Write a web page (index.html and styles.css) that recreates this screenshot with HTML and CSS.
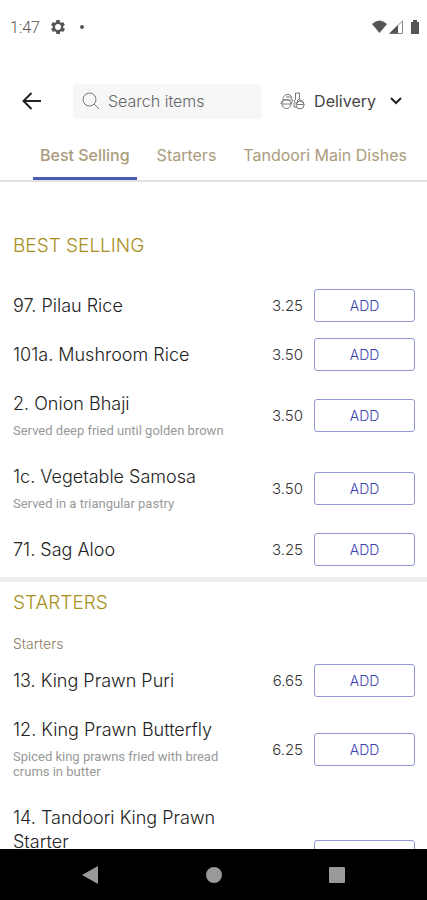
FILE: index.html
```html
<!DOCTYPE html>
<html lang="en">
    <head>
        <meta charset="utf-8">
        <meta name="viewport" content="width=device-width, initial-scale=1">
        <title>Menu</title>
        <link rel="stylesheet" href="styles.css">
    </head>
    <body>
        <div class="statusbar">
            <span class="time">1:47</span>
            <svg class="gear" width="14" height="14" viewBox="2 2 20 20"><path fill-rule="evenodd" d="M19.4 13a7.800 7.800 0 0 0 0-2l2.100-1.600a.5.5 0 0 0 .1-.6l-2-3.500a.5.5 0 0 0-.6-.2l-2.500 1a7.300 7.300 0 0 0-1.700-1l-.4-2.700a.5.5 0 0 0-.5-.4h-4a.5.5 0 0 0-.5.4L9.200 5.100a7.700 7.700 0 0 0-1.700 1L5 5.100a.5.5 0 0 0-.6.2l-2 3.500a.5.5 0 0 0 .1.600L4.600 11a8 8 0 0 0 0 2l-2.100 1.600a.5.5 0 0 0-.1.600l2 3.500c.1.200.4.300.6.200l2.500-1a7.300 7.300 0 0 0 1.700 1l.4 2.700c0 .2.200.4.500.4h4c.200 0 .5-.2.500-.4l.4-2.700a7.700 7.700 0 0 0 1.700-1l2.500 1c.2.100.5 0 .6-.2l2-3.500a.5.5 0 0 0-.1-.6zM12 16.200a4.200 4.200 0 1 1 0-8.400 4.200 4.200 0 0 1 0 8.400z"/></svg>
            <span class="dot"></span>
            <svg class="signals" width="48" height="14" viewBox="0 0 48 14">
                <path d="M0 4Q7.500-3 15 4L7.500 13z"/>
                <path d="M17.500 13.500L30.500 1v12.500z" class="outline"/>
                <path d="M17.500 13.500L26 5v8.500z"/>
                <path d="M39 2h2V0h4v2h2v12h-8z"/>
            </svg>
        </div>

        <header class="topbar">
            <button class="back" aria-label="Back">
                <svg width="20" height="18" viewBox="0 0 20 18"><path d="M19 9H1.500M9.500 1L1.500 9l8 8"/></svg>
            </button>
            <label class="search">
                <svg width="18" height="18" viewBox="0 0 18 18"><circle cx="7.500" cy="7.500" r="6.500"/><path d="M12 12l5 5"/></svg>
                <input type="text" placeholder="Search items" aria-label="Search items">
            </label>
            <button class="delivery">
                <svg class="scooter" width="25" height="18" viewBox="0 0 25 18">
                    <path d="M3 8C3 4 5 2.500 8 2.500S12 5 12 8M1 12c0-3 2-4 5-4h5.500M6 5h5"/>
                    <circle cx="6.500" cy="12" r="4.500"/>
                    <path d="M2 12h9l2-4"/>
                    <path d="M15.500 1h4v6l-2 1v3h-2c-1 0-1-1-1-2l1-2z"/>
                    <path d="M19 8c3 0 5 2 5 5"/>
                    <circle cx="20" cy="13" r="4"/>
                    <path d="M14 11v4h3M17 12.500h6"/>
                </svg>
                <span>Delivery</span>
                <svg class="chevron" width="12" height="8" viewBox="0 0 12 8"><path d="M1 1l5 5 5-5"/></svg>
            </button>
        </header>

        <nav class="tabs">
            <a href="#best" class="active">Best Selling</a>
            <a href="#starters">Starters</a>
            <a href="#tandoori">Tandoori Main Dishes</a>
        </nav>

        <main class="menu">
            <section id="best" class="best">
                <h2>BEST SELLING</h2>
                <div class="item">
                    <div class="info"><h3>97. Pilau Rice</h3></div>
                    <span class="price">3.25</span>
                    <button class="add">ADD</button>
                </div>
                <div class="item">
                    <div class="info"><h3>101a. Mushroom Rice</h3></div>
                    <span class="price">3.50</span>
                    <button class="add">ADD</button>
                </div>
                <div class="item">
                    <div class="info">
                        <h3>2. Onion Bhaji</h3>
                        <p>Served deep fried until golden brown</p>
                    </div>
                    <span class="price">3.50</span>
                    <button class="add">ADD</button>
                </div>
                <div class="item">
                    <div class="info">
                        <h3>1c. Vegetable Samosa</h3>
                        <p>Served in a triangular pastry</p>
                    </div>
                    <span class="price">3.50</span>
                    <button class="add">ADD</button>
                </div>
                <div class="item">
                    <div class="info"><h3>71. Sag Aloo</h3></div>
                    <span class="price">3.25</span>
                    <button class="add">ADD</button>
                </div>
            </section>

            <section id="starters" class="starters">
                <h2>STARTERS</h2>
                <h4>Starters</h4>
                <div class="item">
                    <div class="info"><h3>13. King Prawn Puri</h3></div>
                    <span class="price">6.65</span>
                    <button class="add">ADD</button>
                </div>
                <div class="item">
                    <div class="info">
                        <h3>12. King Prawn Butterfly</h3>
                        <p>Spiced king prawns fried with bread crums in butter</p>
                    </div>
                    <span class="price">6.25</span>
                    <button class="add">ADD</button>
                </div>
                <div class="item tall">
                    <div class="info"><h3>14. Tandoori King Prawn Starter</h3></div>
                    <button class="add" aria-label="Add"></button>
                </div>
            </section>
        </main>

        <div class="navbar">
            <button aria-label="Back"><svg width="18" height="20" viewBox="0 0 18 20"><path d="M17 1v18L1 10z"/></svg></button>
            <button aria-label="Home"><svg width="18" height="18" viewBox="0 0 18 18"><circle cx="9" cy="9" r="8"/></svg></button>
            <button aria-label="Recent apps"><svg width="18" height="18" viewBox="0 0 18 18"><rect x="1" y="1" width="16" height="16" rx="1"/></svg></button>
        </div>
    </body>
</html>
```
FILE: styles.css
```css
* {
    box-sizing: border-box;
}
body {
    margin: 0;
    height: 100vh;
    display: flex;
    flex-direction: column;
    overflow: hidden;
    background-color: #fff;
    font-family: Inter, "Open Sans", sans-serif;
    color: #333;
}
h2, h3, h4, p {
    margin: 0;
    font-weight: 300;
}
button {
    padding: 0;
    border: none;
    background: none;
    font-family: inherit;
    cursor: pointer;
}
svg {
    display: block;
    flex: none;
}

/* android status bar */
.statusbar {
    flex: none;
    display: flex;
    align-items: center;
    height: 54px;
    padding: 0 7px 0 10px;
    fill: #555;
}
.time {
    font-family: Roboto, sans-serif;
    font-size: 16px;
    font-weight: 300;
    color: #555;
}
.gear {
    margin-left: 11px;
}
.dot {
    width: 4px;
    height: 4px;
    margin-left: 15px;
    border-radius: 50%;
    background-color: #555;
}
.signals {
    margin-left: auto;
}
.signals .outline {
    fill: none;
    stroke: #888;
}

.topbar {
    flex: none;
    display: flex;
    align-items: center;
    height: 78px;
    padding: 16px 25px 0 22px;
}
.back, .search svg, .delivery svg {
    fill: none;
    stroke: #222;
    stroke-width: 2;
}
.search {
    flex: 1;
    display: flex;
    align-items: center;
    gap: 8px;
    min-width: 0;
    height: 35px;
    margin-left: 31px;
    padding-left: 9px;
    border-radius: 4px;
    background-color: #f7f7f7;
}
.search svg {
    stroke: #777;
    stroke-width: 1;
}
.search input {
    flex: 1;
    min-width: 0;
    padding: 0;
    border: none;
    outline: none;
    background: none;
    font-family: inherit;
    font-size: 16px;
    font-weight: 300;
}
.search input::placeholder {
    color: #666;
}
.delivery {
    display: flex;
    align-items: center;
    margin-left: 18px;
    font-size: 16px;
    color: #444;
}
.delivery span {
    margin: 0 14px 0 9px;
}
.delivery .scooter {
    stroke: #777;
    stroke-width: 1;
}

.tabs {
    flex: none;
    display: flex;
    gap: 13px;
    height: 50px;
    padding-left: 33px;
    border-bottom: 2px solid #e2e2e2;
    white-space: nowrap;
    overflow: hidden;
}
.tabs a {
    height: 48px;
    padding: 0 7px;
    line-height: 46px;
    font-size: 16px;
    color: #ab9b7c;
    text-decoration: none;
}
.tabs .active {
    border-bottom: 3px solid #4c5bb5;
    font-weight: 500;
}

.menu {
    flex: 1;
    min-height: 0;
    overflow: hidden;
}
.best {
    padding: 52px 0 3px;
    border-bottom: 5px solid #eee;
}
.menu h2 {
    padding-left: 13px;
    line-height: 24px;
    font-size: 19px;
    color: #a98f22;
}
.best h2 {
    margin-bottom: 23px;
}
.starters {
    padding-top: 9px;
}
.menu h4 {
    margin: 19px 0 2px;
    padding-left: 13px;
    line-height: 20px;
    font-size: 14px;
    color: #8d7c61;
}

.item {
    display: flex;
    align-items: center;
    padding: 0 12px 0 13px;
}
.info {
    flex: 1;
    align-self: flex-start;
    padding: 13px 10px 12px 0;
}
.info h3 {
    line-height: 24px;
    font-size: 18px;
    color: #222;
}
.info p {
    margin: 7px 0 2px;
    line-height: 15px;
    font-family: Roboto, sans-serif;
    font-size: 13px;
    font-weight: 400;
    color: #999;
}
.price {
    width: 50px;
    text-align: right;
    font-size: 15px;
    font-weight: 300;
}
.add {
    width: 101px;
    height: 33px;
    margin-left: 11px;
    border: 1px solid #9599d3;
    border-radius: 3px;
    font-size: 14px;
    font-weight: 300;
    color: #3a3fb0;
}
.tall {
    min-height: 127px;
}
.tall .info {
    margin-right: 50px;
}

/* android buttons */
.navbar {
    flex: none;
    display: flex;
    height: 51px;
    padding: 0 28px;
    background-color: #000;
    fill: #999;
}
.navbar button {
    flex: 1;
    display: flex;
    align-items: center;
    justify-content: center;
}
```
